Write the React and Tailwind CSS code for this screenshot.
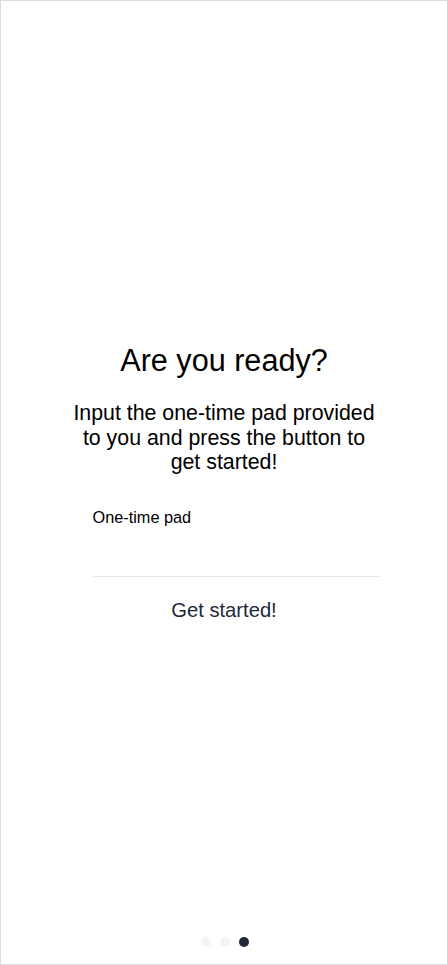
export default function App() {
  return (
    <div className="w-[448px] h-[965px] bg-white border border-[#dcdcdc] flex flex-col font-['Liberation_Sans',Arial,sans-serif]">
      {/* slide */}
      <div className="flex-1 pt-[341px] flex flex-col items-center">
        <h1 className="text-[30.6px] leading-[36px] text-black">Are you ready?</h1>
        <p className="mt-[23px] w-[310px] text-center text-[21.33px] leading-[24.5px] text-black">
          Input the one-time pad provided to you and press the button to get started!
        </p>

        <div className="mt-[30px] w-[287px] ml-[24px]">
          <label className="block text-[16.3px] leading-[24px] text-black">One-time pad</label>
          <input
            type="text"
            className="block w-full h-[48px] border-b border-[#e5e7eb] outline-none bg-transparent"
          />
        </div>

        <button className="mt-[19px] text-[20.2px] leading-[28px] text-[#1f2937]">
          Get started!
        </button>
      </div>

      {/* pager dots */}
      <div className="flex justify-center gap-[9px] pb-[17px] pl-[2px]">
        <div className="w-[10px] h-[10px] rounded-full bg-[#f3f4f6]" />
        <div className="w-[10px] h-[10px] rounded-full bg-[#f3f4f6]" />
        <div className="w-[10px] h-[10px] rounded-full bg-[#1f2937]" />
      </div>
    </div>
  )
}
